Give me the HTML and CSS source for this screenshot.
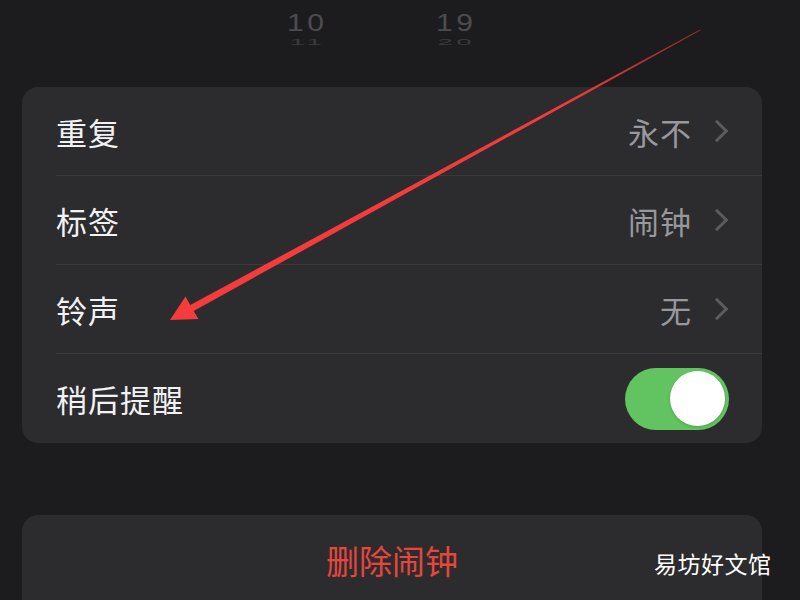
FILE: index.html
```html
<!DOCTYPE html>
<html lang="zh-CN">
<head>
    <meta charset="UTF-8">
    <meta name="viewport" content="width=device-width, initial-scale=1.0">
    <title>编辑闹钟</title>
    <link rel="stylesheet" href="styles.css">
</head>
<body>
    <div class="screen">
        <div class="picker">
            <div class="wheel">
                <span class="num">10</span>
                <span class="num next">11</span>
            </div>
            <div class="wheel">
                <span class="num">19</span>
                <span class="num next">20</span>
            </div>
        </div>

        <div class="group">
            <div class="row">
                <span class="label">重复</span>
                <span class="value">永不<span class="chevron"></span></span>
            </div>
            <div class="row">
                <span class="label">标签</span>
                <span class="value">闹钟<span class="chevron"></span></span>
            </div>
            <div class="row">
                <span class="label">铃声</span>
                <span class="value">无<span class="chevron"></span></span>
            </div>
            <div class="row">
                <span class="label">稍后提醒</span>
                <span class="toggle"><span class="knob"></span></span>
            </div>
        </div>

        <div class="group delete">
            <span class="delete-text">删除闹钟</span>
        </div>

        <svg class="arrow" width="800" height="600" viewBox="0 0 800 600">
            <defs>
                <linearGradient id="fade" x1="700" y1="30" x2="170" y2="320" gradientUnits="userSpaceOnUse">
                    <stop offset="0" stop-color="#f23b3b" stop-opacity="0.5"/>
                    <stop offset="0.25" stop-color="#f23b3b"/>
                    <stop offset="1" stop-color="#f43c3c"/>
                </linearGradient>
            </defs>
            <polygon fill="url(#fade)" points="700,29.6 190.3,305 185.5,296.5 170,320 198.5,319 193.7,311 700.3,30.4"/>
        </svg>

        <div class="watermark">易坊好文馆</div>
    </div>
</body>
</html>
```

FILE: styles.css
```css
body {
    margin: 0;
    padding: 0;
    background-color: #1c1c1e;
    font-family: "Noto Sans CJK SC", "Noto Sans", sans-serif;
}
.screen {
    position: relative;
    width: 800px;
    height: 600px;
    overflow: hidden;
}
.picker {
    height: 87px;
    display: flex;
    gap: 79px;
    padding-left: 272px;
    box-sizing: border-box;
}
.wheel {
    display: flex;
    flex-direction: column;
    align-items: center;
    padding-top: 10px;
    width: 70px;
}
.num {
    font-family: "Liberation Sans", Arial, sans-serif;
    font-size: 24px;
    line-height: 26px;
    letter-spacing: 3px;
    color: #4c4c4f;
    transform: scaleX(1.25);
}
.next {
    color: #3a3a3d;
    line-height: 12px;
    transform: scaleX(1.15) scaleY(0.35);
    margin-top: 0;
}
.group {
    margin: 0 38px 0 22px;
    background-color: #2c2c2e;
    border-radius: 16px;
    padding-left: 34px;
}
.row {
    height: 89px;
    display: flex;
    align-items: center;
    justify-content: space-between;
    padding-right: 32px;
    border-bottom: 1px solid #3a3a3c;
    box-sizing: border-box;
}
.row:last-child {
    border-bottom: none;
}
.label {
    font-size: 31px;
    color: #f2f2f4;
    letter-spacing: 1px;
}
.value {
    font-size: 31px;
    color: #98989d;
    display: flex;
    align-items: center;
    letter-spacing: 1px;
}
.chevron {
    width: 13px;
    height: 13px;
    border-top: 3px solid #5b5b60;
    border-right: 3px solid #5b5b60;
    transform: rotate(45deg);
    margin-left: 17px;
    margin-right: 5px;
}
.toggle {
    width: 104px;
    height: 62px;
    border-radius: 31px;
    background-color: #62c461;
    display: flex;
    align-items: center;
    justify-content: flex-end;
    padding: 4px;
    box-sizing: border-box;
    margin-right: 1px;
}
.knob {
    width: 55px;
    height: 55px;
    border-radius: 50%;
    background-color: #ffffff;
    box-shadow: 0 1px 3px rgba(0, 0, 0, 0.2);
}
.delete {
    margin-top: 72px;
    height: 100px;
    padding-left: 0;
    display: flex;
    justify-content: center;
    padding-bottom: 10px;
    box-sizing: border-box;
    align-items: center;
}
.delete-text {
    font-size: 33px;
    color: #e5473d;
}
.arrow {
    position: absolute;
    left: 0;
    top: 0;
}
.watermark {
    position: absolute;
    left: 654px;
    top: 546px;
    font-size: 23px;
    color: #ffffff;
    letter-spacing: 0.5px;
}
```
